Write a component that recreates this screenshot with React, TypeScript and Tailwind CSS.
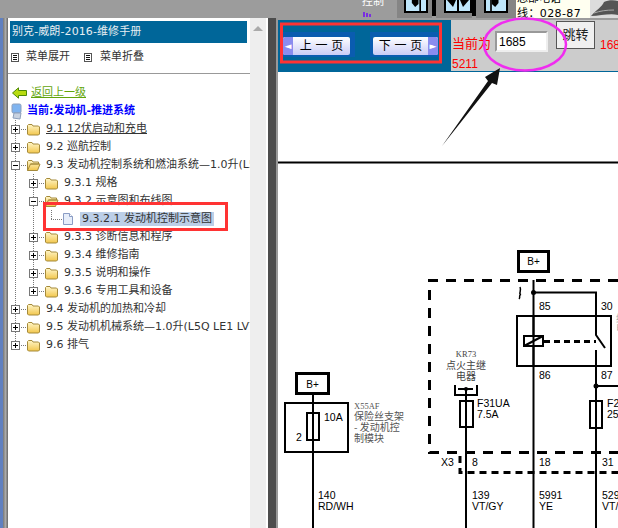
import React from "react";

const sans = "font-['DejaVu_Sans','Noto_Sans_CJK_SC',sans-serif]";

function Folder({ open }: { open?: boolean }) {
  return (
    <svg width="15" height="13" viewBox="0 0 15 13" className="shrink-0">
      <defs>
        <linearGradient id="fold" x1="0" y1="0" x2="0" y2="1">
          <stop offset="0" stopColor="#fff6c8" />
          <stop offset="1" stopColor="#f2c64c" />
        </linearGradient>
      </defs>
      {open ? (
        <path d="M1.5 11.5V2.5L2.5 1.5H6L7 3H12.5V5H4.5L1.5 11.5H11.5L14 5H4.5" fill="url(#fold)" stroke="#a58a3a" strokeWidth="1" />
      ) : (
        <path d="M1.5 11V2.5L2.5 1.5H6L7 3H12.5L13.5 4V11L12.5 12H2.5Z" fill="url(#fold)" stroke="#a58a3a" strokeWidth="1" />
      )}
    </svg>
  );
}

// one 18px column of tree lines, optionally with a +/- box
function Gutter({ box, bottom = true }: { box?: "+" | "-"; bottom?: boolean }) {
  return (
    <svg width="18" height="18" viewBox="0 0 18 18" className="shrink-0">
      <line x1="7.5" y1="0" x2="7.5" y2={bottom ? 18 : 9} stroke="#777" strokeDasharray="1 1" />
      {box && (
        <g>
          <line x1="7" y1="9.5" x2="18" y2="9.5" stroke="#777" strokeDasharray="1 1" />
          <rect x="3.5" y="5.5" width="8" height="8" fill="#fff" stroke="#777" />
          <line x1="5" y1="9.5" x2="10" y2="9.5" stroke="#000" />
          {box === "+" && <line x1="7.5" y1="7" x2="7.5" y2="12" stroke="#000" />}
        </g>
      )}
    </svg>
  );
}

type Node = { label: string; box?: "+" | "-"; open?: boolean; under?: boolean };

function Row({ n, sub, last }: { n: Node; sub?: boolean; last?: boolean }) {
  return (
    <div className="flex h-[18px] items-center whitespace-nowrap text-[11px] text-[#333]">
      {sub && <Gutter />}
      <Gutter box={n.box} bottom={!last} />
      <span className="mr-[5px] flex">
        <Folder open={n.open} />
      </span>
      <span className={n.under ? "underline" : ""}>{n.label}</span>
    </div>
  );
}

function Tree() {
  const subs: Node[] = [
    { label: "9.3.3 诊断信息和程序", box: "+" },
    { label: "9.3.4 维修指南", box: "+" },
    { label: "9.3.5 说明和操作", box: "+" },
  ];
  return (
    <div>
      <Row n={{ label: "9.1 12伏启动和充电", box: "+", under: true }} />
      <Row n={{ label: "9.2 巡航控制", box: "+" }} />
      <Row n={{ label: "9.3 发动机控制系统和燃油系统—1.0升(L5Q LE1 LV7)", box: "-", open: true }} />
      <Row sub n={{ label: "9.3.1 规格", box: "+" }} />
      <Row sub n={{ label: "9.3.2 示意图和布线图", box: "-", open: true }} />
      <div className="flex h-[18px] items-center whitespace-nowrap text-[11px] text-[#333]">
        <Gutter />
        <Gutter />
        <svg width="18" height="18" viewBox="0 0 18 18" className="shrink-0">
          <line x1="7.5" y1="0" x2="7.5" y2="9" stroke="#777" strokeDasharray="1 1" />
          <line x1="7" y1="9.5" x2="18" y2="9.5" stroke="#777" strokeDasharray="1 1" />
        </svg>
        <svg width="12" height="14" viewBox="0 0 12 14" className="shrink-0">
          <path d="M1.5 1.5H7.5L10.5 4.5V12.5H1.5Z" fill="#e6edf9" stroke="#8a9cc4" />
          <path d="M7.5 1.5V4.5H10.5" fill="#fff" stroke="#8a9cc4" />
        </svg>
        <span className="ml-[6px] bg-[#bccfe8] px-[2px] leading-[14px]">9.3.2.1 发动机控制示意图</span>
      </div>
      {subs.map((n) => (
        <Row key={n.label} sub n={n} />
      ))}
      <div className="flex h-[18px] items-center whitespace-nowrap text-[11px] text-[#333]">
        <Gutter />
        <Gutter box="+" bottom={false} />
        <span className="mr-[5px] flex">
          <Folder />
        </span>
        <span>9.3.6 专用工具和设备</span>
      </div>
      <Row n={{ label: "9.4 发动机的加热和冷却", box: "+" }} />
      <Row n={{ label: "9.5 发动机机械系统—1.0升(L5Q LE1 LV7)", box: "+" }} />
      <Row last n={{ label: "9.6 排气", box: "+" }} />
    </div>
  );
}

function MenuIcon() {
  return (
    <svg width="8" height="9" viewBox="0 0 8 9" className="shrink-0">
      <rect x="0.5" y="0.5" width="7" height="8" fill="#fff" stroke="#555" />
      <path d="M2 2.5H6M2 4.5H6M2 6.5H6" stroke="#111" />
    </svg>
  );
}

function LeftPane() {
  return (
    <div className={`flex w-[258px] shrink-0 bg-white ${sans}`}>
      <div className="w-[242px] shrink-0 overflow-hidden pt-[3px]">
        <div className="mx-[2px] flex h-[22px] w-[237px] items-center bg-[#006699] pl-[2px] text-[11px] tracking-[0.1px] text-[#e8eef2]">
          别克-威朗-2016-维修手册
        </div>
        <div className="flex h-[31px] items-start border-b border-[#999] pl-[3px] pt-[6px] text-[11px] text-[#333]">
          <span className="flex w-[73px] items-center gap-[7px]">
            <MenuIcon />
            菜单展开
          </span>
          <span className="flex items-center gap-[8px]">
            <MenuIcon />
            菜单折叠
          </span>
        </div>
        <div className="mt-[10px] flex h-[18px] items-center pl-[4px] text-[11px] text-[#62a50a]">
          <svg width="15" height="12" viewBox="0 0 15 12" className="mr-[4px] shrink-0">
            <path d="M0.5 6L6.5 0.8V3.5H14.5V8.5H6.5V11.2Z" fill="#b8dc10" stroke="#4f8a08" />
          </svg>
          <span className="underline">返回上一级</span>
        </div>
        <div className="flex h-[18px] items-center pl-[3px] text-[11px] font-bold text-[#0000ff]">
          <svg width="12" height="17" viewBox="0 0 12 17" className="mr-[4px] shrink-0">
            <rect x="1" y="1" width="9" height="9" rx="1.5" fill="#7fb4f0" stroke="#8d9fbb" />
            <path d="M3 10L2 15L9 16L10 10Z" fill="#c8d2e0" stroke="#8d9fbb" />
          </svg>
          当前:发动机-推进系统
        </div>
        <Tree />
      </div>
      <div className="flex w-[16px] shrink-0 justify-center bg-[#eeeeee] pt-[8px]">
        <div className="h-0 w-0 border-x-[5px] border-b-[5px] border-x-transparent border-b-[#aaa]" />
      </div>
    </div>
  );
}

function ToolBtn({ kind, width }: { kind: 0 | 1 | 2; width: string }) {
  return (
    <div className={`h-[13px] ${width} border-x-2 border-b-2 border-black bg-[#bfe6fb]`}>
      <svg width="100%" height="11" viewBox="0 0 24 11" preserveAspectRatio="none">
        {kind === 1 ? (
          <path d="M1 0H10L7 7ZM14 0H23L17 7Z" fill="#000" />
        ) : (
          <path d={kind === 0 ? "M7 0H15V4L11 7L7 3Z" : "M7 0H15V3L11 7L7 4Z"} fill="#000" />
        )}
        {kind !== 1 && <rect x={kind === 0 ? 16 : 5} y="0" width="2" height="11" fill="#000" />}
        {kind === 1 && <rect x="11" y="0" width="2" height="11" fill="#000" />}
      </svg>
    </div>
  );
}

function TopBar() {
  return (
    <div className="flex h-[18px] shrink-0 items-start overflow-hidden bg-[#9c9c9c]">
      <div className={`ml-[362px] w-[35px] shrink-0 ${sans}`}>
        <div className="-mt-[5px] text-[11px] leading-[14px] text-white">控制</div>
        <div className="mt-[3px] flex gap-[1px] pl-[1px]">
          <span className="h-[5px] w-[2px] bg-[#7a2ee0]" />
          <span className="mt-[1px] h-[4px] w-[2px] bg-[#7a2ee0]" />
          <span className="mt-[2px] h-[3px] w-[2px] bg-[#7a2ee0]" />
        </div>
      </div>
      <div className="h-[18px] w-[35px] shrink-0 bg-[#858585] pl-[7px]">
        <ToolBtn kind={0} width="w-[24px]" />
      </div>
      <div className="h-[16px] w-[4px] shrink-0 bg-black" />
      <div className="h-[18px] w-[36px] shrink-0 bg-[#858585] pl-[8px]">
        <ToolBtn kind={1} width="w-[28px]" />
      </div>
      <div className="h-[16px] w-[4px] shrink-0 bg-black" />
      <div className="h-[18px] w-[40px] shrink-0 bg-[#858585] pl-[8px]">
        <ToolBtn kind={2} width="w-[24px]" />
      </div>
      <div className={`h-[18px] w-[74px] shrink-0 bg-[#fffff0] pl-[1px] text-[11px] leading-[14px] text-black ${sans}`}>
        <div className="-mt-[8px]">总部电话</div>
        <div className="mt-[1px] tracking-[0.4px]">线：028-87</div>
      </div>
      <div className="h-[18px] flex-1 bg-[#dcdcdc]">
        <svg width="28" height="18" viewBox="0 0 28 18">
          <path d="M1 16C6 10 12 7 14 2C18 0 24 0 28 1V15C20 13 10 16 1 16Z" fill="#555" />
          <path d="M4 13C10 11 16 10 24 10" stroke="#aaa" fill="none" />
        </svg>
      </div>
    </div>
  );
}

function PageButton({ label, dir, width }: { label: string; dir: "prev" | "next"; width: string }) {
  const arrow = (
    <div className="flex h-full w-[10px] shrink-0 items-center justify-center bg-[#8a8cee] text-[9px] leading-none text-white">
      {dir === "prev" ? "◄" : "►"}
    </div>
  );
  return (
    <div className={`flex h-[18px] ${width} items-center overflow-hidden rounded-[2px] bg-[linear-gradient(#ffffff,#c9ccf6)] text-[12px] text-black`}>
      {dir === "prev" && arrow}
      <span className="flex-1 whitespace-nowrap text-center">{label}</span>
      {dir === "next" && arrow}
    </div>
  );
}

function PageHeader() {
  return (
    <div className="flex h-[52px] shrink-0 border-b border-[#006699]">
      <div className={`flex w-[173px] shrink-0 items-start gap-[15px] bg-[#006699] pl-[5px] pt-[12px] ${sans}`}>
        <div className="border-b-[2px] border-r-[5px] border-t-[5px] border-[#0a5cb0]">
          <PageButton dir="prev" label="上 一 页" width="w-[67px]" />
        </div>
        <div className="border-b-[2px] border-l-[3px] border-t-[5px] border-[#0a5cb0]">
          <PageButton dir="next" label="下 一 页" width="w-[65px]" />
        </div>
      </div>
      <div className={`flex flex-1 items-start overflow-hidden bg-[#cccccc] text-[13px] text-[#ff0000] ${sans}`}>
        <div className="w-[44px] shrink-0 pl-[1px] pt-[14px] leading-[20px]">
          <div className="whitespace-nowrap">当前为</div>
          <div className="font-['Liberation_Sans',sans-serif] text-[12px]">5211</div>
        </div>
        <input
          readOnly
          value="1685"
          className="mt-[11px] h-[21px] w-[53px] shrink-0 border-2 border-b-[#eee] border-l-[#999] border-r-[#eee] border-t-[#999] bg-white pl-[2px] font-['Liberation_Sans',sans-serif] text-[12px] text-black outline-none"
        />
        <div className="ml-[8px] mt-[1px] flex h-[28px] w-[39px] shrink-0 items-center justify-center border border-[#555] bg-[#f0f0f0] text-[13px] text-[#222]">
          跳转
        </div>
        <div className="ml-[5px] mt-[16px] font-['Liberation_Sans',sans-serif] text-[12px]">1685</div>
      </div>
    </div>
  );
}

// wiring diagram, drawn in page coordinates
function Diagram() {
  const lbl = "font-['Liberation_Sans',sans-serif]";
  const cjk = "font-['Noto_Sans_CJK_SC',sans-serif]";
  const serif = "font-['Liberation_Serif',serif]";
  return (
    <svg viewBox="278 72 340 456" className="block h-[456px] w-[340px] bg-white">
      <line x1="278" y1="162.5" x2="618" y2="162.5" stroke="#000" strokeWidth="2" />

      {/* fuse block on the left */}
      <rect x="296.5" y="373.5" width="32" height="20" fill="#fff" stroke="#000" strokeWidth="3" />
      <text x="312.5" y="388" textAnchor="middle" fontSize="10" className={lbl}>B+</text>
      <rect x="285" y="403" width="63" height="49" fill="none" stroke="#000" strokeWidth="2" />
      <line x1="313" y1="395" x2="313" y2="528" stroke="#000" strokeWidth="2" />
      <rect x="307" y="413" width="12" height="27" fill="none" stroke="#000" strokeWidth="2" />
      <text x="324" y="421" fontSize="10.5" className={lbl}>10A</text>
      <text x="296" y="441" fontSize="10.5" className={lbl}>2</text>
      <text x="354" y="409" fontSize="8.5" fill="#555" className={serif}>X55AF</text>
      <g fill="#555" fontSize="10" className={cjk}>
        <text x="354" y="420">保险丝支架</text>
        <text x="354" y="431">- 发动机控</text>
        <text x="354" y="442">制模块</text>
      </g>
      <g fontSize="10.5" className={lbl}>
        <text x="318" y="499">140</text>
        <text x="318" y="510">RD/WH</text>
      </g>

      {/* dashed housing */}
      <path d="M618 280.5H429.5V452.5H618" fill="none" stroke="#000" strokeWidth="3" strokeDasharray="10 8" />
      <path d="M460 456V472.5H618" fill="none" stroke="#000" strokeWidth="3" strokeDasharray="7 5" />

      {/* top B+ and relay */}
      <rect x="518.5" y="251.5" width="30" height="20" fill="#fff" stroke="#000" strokeWidth="3" />
      <text x="533.5" y="265" textAnchor="middle" fontSize="10" className={lbl}>B+</text>
      <line x1="533.5" y1="280" x2="533.5" y2="528" stroke="#000" strokeWidth="2" />
      <circle cx="533.5" cy="292.5" r="2.5" fill="#000" />
      <path d="M533.5 292.5H596V335L605 348M596 350V528" fill="none" stroke="#000" strokeWidth="2" />
      <path d="M520 287C522 291 518 294 521 294.5C518 295 521 297 519 299" fill="none" stroke="#000" strokeWidth="1.5" />
      <rect x="517" y="316" width="94" height="50" fill="none" stroke="#000" strokeWidth="2" />
      <rect x="524" y="336" width="19" height="10" fill="#fff" stroke="#000" strokeWidth="2" />
      <line x1="533.5" y1="316" x2="533.5" y2="366" stroke="#000" strokeWidth="2" />
      <line x1="524" y1="346" x2="543" y2="336" stroke="#000" strokeWidth="2" />
      <line x1="544" y1="341.5" x2="596" y2="341.5" stroke="#000" strokeWidth="3" strokeDasharray="6 4" />
      <circle cx="596" cy="386" r="2.5" fill="#000" />
      <line x1="596" y1="386" x2="618" y2="386" stroke="#000" strokeWidth="2" />
      <g fontSize="10.5" className={lbl}>
        <text x="539" y="310">85</text>
        <text x="601" y="310">30</text>
        <text x="539" y="379">86</text>
        <text x="601" y="379">87</text>
      </g>
      <g fill="#aaa" fontSize="10" className={cjk}>
        <text x="616" y="322">继</text>
        <text x="616" y="332">电</text>
      </g>

      {/* KR73 */}
      <text x="466" y="357" fontSize="8.5" fill="#444" textAnchor="middle" className={serif}>KR73</text>
      <g fill="#444" fontSize="10" textAnchor="middle" className={cjk}>
        <text x="466" y="369">点火主继</text>
        <text x="466" y="380">电器</text>
      </g>
      <path d="M455 385V395H477V385" fill="none" stroke="#000" strokeWidth="2" />
      <line x1="458" y1="389" x2="473" y2="389" stroke="#000" strokeWidth="2" />
      <circle cx="466" cy="389" r="2" fill="#000" />
      <line x1="466" y1="389" x2="466" y2="528" stroke="#000" strokeWidth="2" />
      <rect x="460" y="401" width="13" height="26" fill="#fff" stroke="#000" strokeWidth="2" />
      <line x1="466" y1="401" x2="466" y2="427" stroke="#000" strokeWidth="2" />
      <rect x="590" y="401" width="12" height="27" fill="#fff" stroke="#000" strokeWidth="2" />
      <line x1="596" y1="401" x2="596" y2="428" stroke="#000" strokeWidth="2" />
      <g fontSize="10.5" className={lbl}>
        <text x="477" y="407">F31UA</text>
        <text x="477" y="418">7.5A</text>
        <text x="607" y="407">F2</text>
        <text x="607" y="418">25</text>
        <text x="441" y="466">X3</text>
        <text x="472" y="466">8</text>
        <text x="539" y="466">18</text>
        <text x="602" y="466">31</text>
        <text x="472" y="499">139</text>
        <text x="472" y="510">VT/GY</text>
        <text x="539" y="499">5991</text>
        <text x="539" y="510">YE</text>
        <text x="602" y="499">529</text>
        <text x="602" y="510">VT/</text>
      </g>
    </svg>
  );
}

function Marks() {
  return (
    <svg viewBox="0 0 618 528" className="pointer-events-none absolute left-0 top-0 h-[528px] w-[618px]">
      <rect x="281.5" y="24" width="159" height="38" fill="none" stroke="#ff3333" strokeWidth="3" />
      <rect x="44.5" y="203.5" width="182" height="26" fill="none" stroke="#ff3333" strokeWidth="3" />
      <ellipse cx="525" cy="44.5" rx="41" ry="26" fill="none" stroke="#f02cf0" strokeWidth="2.5" />
      <path d="M442 146L488 81L485 77L500 68L497 85L492 83Z" fill="#111" />
    </svg>
  );
}

export default function App() {
  return (
    <div className="relative flex h-[528px] w-[618px] flex-col overflow-hidden bg-[#9c9c9c]">
      <TopBar />
      <div className="flex min-h-0 flex-1 border-l-[3px] border-[#6080c0]">
        <div className="w-[5px] shrink-0 bg-[linear-gradient(90deg,#777,#aaa,#666)]" />
        <LeftPane />
        <div className="w-[2px] shrink-0 bg-white" />
        <div className="w-[8px] shrink-0 bg-[#4d4d4d]" />
        <div className="w-[2px] shrink-0 bg-[#999]" />
        <div className="flex min-w-0 flex-1 flex-col pt-[2px]">
          <PageHeader />
          <Diagram />
        </div>
      </div>
      <Marks />
    </div>
  );
}
